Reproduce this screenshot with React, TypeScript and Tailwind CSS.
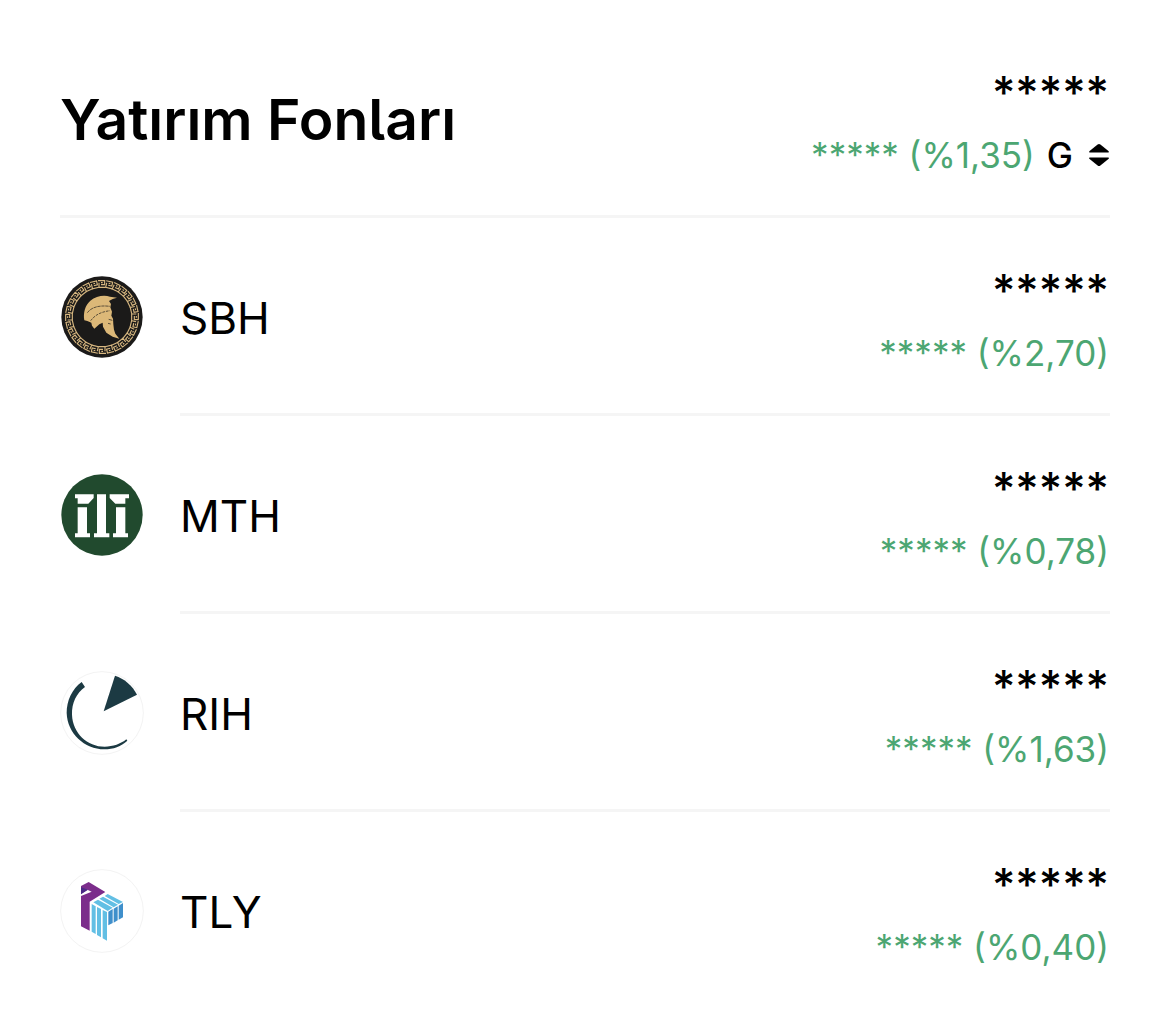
import type { ReactNode } from "react";

type Fund = {
  code: string;
  change: string;
  logo: ReactNode;
};

const keys = Array.from({ length: 28 }, (_, i) => (i * 360) / 28);

const SpartanLogo = () => (
  <svg viewBox="30 29 252 252" className="size-21 shrink-0" aria-hidden="true">
    <circle cx="156" cy="155" r="122" fill="#1b1a19" />
    <g fill="none" stroke="#d8b881" strokeWidth="3.4">
      {keys.map((angle) => (
        <path
          key={angle}
          d="M144 46H164V58H153M147 52V66H167M153 52H158"
          transform={`rotate(${angle} 156 155)`}
        />
      ))}
    </g>
    <path
      fill="#dcb878"
      d="M103 165C99 143 105 120 121 106C138 92 162 88 180 94L201 97L188 101L177 107L183 116L181 126L186 139L184 151L189 160L190 177L192 193L196 205L208 220L188 214L169 202L159 184L158 172L148 177L133 190L126 181L124 172L112 167Z"
    />
    <g fill="none" stroke="#1b1a19">
      <path d="M112 142C124 126 146 119 180 123" strokeWidth="2" strokeDasharray="10 2" />
      <path d="M122 166C136 148 152 140 180 136" strokeWidth="2" strokeDasharray="8 3" />
      <path d="M176 162L187 165M174 174L182 176" strokeWidth="2" />
    </g>
  </svg>
);

const PillarsLogo = () => (
  <svg viewBox="30 29 252 252" className="size-21 shrink-0" aria-hidden="true">
    <circle cx="156" cy="155" r="122" fill="#214a2e" />
    <g fill="#fff">
      <path d="M75 93H131V104L115 121H83V105H75Z" />
      <path d="M83 132H111V210H120V222H75V210H83Z" />
      <path d="M141 93H168V210H178V222H132V210H141Z" />
      <path d="M179 93H237V105H226V121H196L179 104Z" />
      <path d="M198 132H226V210H234V222H189V210H198Z" />
    </g>
  </svg>
);

const ArcLogo = () => (
  <svg viewBox="30 29 252 252" className="size-21 shrink-0" aria-hidden="true">
    <circle cx="156" cy="155" r="124" fill="#fff" stroke="#f3f3f3" strokeWidth="3" />
    <g fill="#1c3a43">
      <path d="M161 150L195 43C223 52 247 72 261 100Z" />
      <path d="M95 62L105 77C79 96 65 125 66 160C68 215 112 256 164 256C189 256 212 248 229 234L232 238C213 255 190 264 163 264C103 264 52 216 50 155C50 118 66 83 95 62Z" />
    </g>
  </svg>
);

const BlocksLogo = () => (
  <svg viewBox="30 29 252 252" className="size-21 shrink-0" aria-hidden="true">
    <circle cx="156" cy="155" r="124" fill="#fff" stroke="#f3f3f3" strokeWidth="3" />
    <path fill="#7b2d8b" d="M93 80L116 68L166 98L119 127V214L93 201V110L125 97L112 91L93 104Z" />
    <path fill="#4b2a86" d="M93 84L114 91L93 105Z" />
    <g fill="#62bfe4">
      <path d="M125 134L137 141V224L125 217Z" />
      <path d="M141 143L153 149V234L141 227Z" />
      <path d="M158 152L171 158V244L158 237Z" />
      <path d="M164 110L173 104L219 128L206 134Z" />
      <path d="M148 118L159 112L204 136L191 144Z" />
      <path d="M130 129L144 121L188 145L173 155Z" />
    </g>
    <g fill="#3f8fcb">
      <path d="M175 157L188 149V191L175 198Z" />
      <path d="M191 148L203 141V183L191 190Z" />
      <path d="M206 139L219 131V174L206 181Z" />
    </g>
  </svg>
);

const funds: Fund[] = [
  { code: "SBH", change: "%2,70", logo: <SpartanLogo /> },
  { code: "MTH", change: "%0,78", logo: <PillarsLogo /> },
  { code: "RIH", change: "%1,63", logo: <ArcLogo /> },
  { code: "TLY", change: "%0,40", logo: <BlocksLogo /> },
];

const Amounts = ({ change, children }: { change: string; children?: ReactNode }) => (
  <div className="flex flex-col items-end gap-2.5 pt-1 pr-px">
    <span className="text-[45px] leading-14 font-medium">*****</span>
    <div className="flex items-center gap-3 text-[35px] leading-12">
      <span className="text-[#4ca672]">***** ({change})</span>
      {children}
    </div>
  </div>
);

const App = () => {
  return (
    <main className="min-h-screen bg-white px-[60px] pt-5 font-[Inter,sans-serif] text-black">
      <header className="flex h-[198px] items-center justify-between border-b-3 border-[#f5f5f5] pt-1">
        <h1 className="text-[57px] leading-16 font-semibold [font-feature-settings:'cv05']">
          Yatırım Fonları
        </h1>
        <Amounts change="%1,35">
          <button type="button" aria-label="G" className="flex items-center gap-4 font-medium">
            G
            <svg viewBox="0 0 20 24" className="h-6 w-5" fill="currentColor" aria-hidden="true">
              <path d="M.6 9.500Q-.4 9 .6 8L8.600 1.400Q10 .4 11.400 1.400L19.400 8Q20.400 9 19.400 9.500Z" />
              <path d="M.6 14.500Q-.4 15 .6 16L8.600 22.600Q10 23.600 11.400 22.600L19.400 16Q20.400 15 19.400 14.500Z" />
            </svg>
          </button>
        </Amounts>
      </header>
      <ul>
        {funds.map((fund) => (
          <li key={fund.code} className="group flex items-center gap-9">
            {fund.logo}
            <div className="flex h-[198px] flex-1 items-center justify-between border-b-3 border-[#f5f5f5] pt-1 group-last:border-transparent">
              <span className="text-[44px] leading-14">{fund.code}</span>
              <Amounts change={fund.change} />
            </div>
          </li>
        ))}
      </ul>
    </main>
  );
};

export default App;
